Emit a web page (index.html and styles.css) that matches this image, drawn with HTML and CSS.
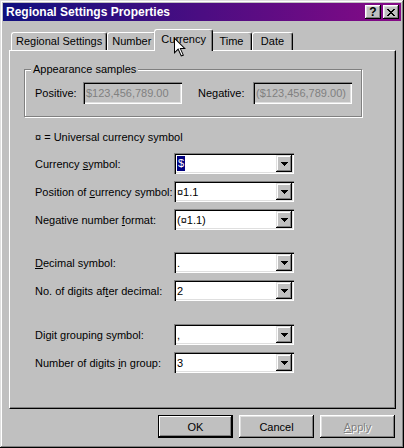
FILE: index.html
```html
<!DOCTYPE html>
<html>
<head>
    <title>Regional Settings Properties</title>
    <link rel="stylesheet" href="styles.css">
</head>
<body>
<div class="window">
    <div class="titlebar">
        <span class="title">Regional Settings Properties</span>
        <button class="cap-btn help">?</button>
        <button class="cap-btn close">
            <svg width="8" height="7" viewBox="0 0 8 7" shape-rendering="crispEdges"><path d="M0 0h2v1H0zM6 0h2v1H6zM1 1h2v1H1zM5 1h2v1H5zM2 2h4v1H2zM3 3h2v1H3zM2 4h4v1H2zM1 5h2v1H1zM5 5h2v1H5zM0 6h2v1H0zM6 6h2v1H6z" fill="#000"/></svg>
        </button>
    </div>

    <div class="content">
        <div class="tabs">
            <div class="tab">Regional Settings</div>
            <div class="tab">Number</div>
            <div class="tab active">Currency</div>
            <div class="tab">Time</div>
            <div class="tab">Date</div>
        </div>

        <div class="panel">
            <div class="group">
                <span class="group-label">Appearance samples</span>
                <div class="sample-row">
                    <span class="sample-label">Positive:</span>
                    <span class="sample">$123,456,789.00</span>
                    <span class="sample-label negative">Negative:</span>
                    <span class="sample">($123,456,789.00)</span>
                </div>
            </div>

            <p class="note">¤ = Universal currency symbol</p>

            <div class="section">
                <div class="row">
                    <label>Currency <u>s</u>ymbol:</label>
                    <div class="combo"><span class="combo-value"><span class="selected">$</span></span><span class="combo-btn"><svg width="7" height="4" shape-rendering="crispEdges"><path d="M0 0h7v1H0zM1 1h5v1H1zM2 2h3v1H2zM3 3h1v1H3z" fill="#000"/></svg></span></div>
                </div>
                <div class="row">
                    <label>Position of <u>c</u>urrency symbol:</label>
                    <div class="combo"><span class="combo-value">¤1.1</span><span class="combo-btn"><svg width="7" height="4" shape-rendering="crispEdges"><path d="M0 0h7v1H0zM1 1h5v1H1zM2 2h3v1H2zM3 3h1v1H3z" fill="#000"/></svg></span></div>
                </div>
                <div class="row">
                    <label>Negative number <u>f</u>ormat:</label>
                    <div class="combo"><span class="combo-value">(¤1.1)</span><span class="combo-btn"><svg width="7" height="4" shape-rendering="crispEdges"><path d="M0 0h7v1H0zM1 1h5v1H1zM2 2h3v1H2zM3 3h1v1H3z" fill="#000"/></svg></span></div>
                </div>
            </div>

            <div class="section">
                <div class="row">
                    <label><u>D</u>ecimal symbol:</label>
                    <div class="combo"><span class="combo-value">.</span><span class="combo-btn"><svg width="7" height="4" shape-rendering="crispEdges"><path d="M0 0h7v1H0zM1 1h5v1H1zM2 2h3v1H2zM3 3h1v1H3z" fill="#000"/></svg></span></div>
                </div>
                <div class="row">
                    <label>No. of digits af<u>t</u>er decimal:</label>
                    <div class="combo"><span class="combo-value">2</span><span class="combo-btn"><svg width="7" height="4" shape-rendering="crispEdges"><path d="M0 0h7v1H0zM1 1h5v1H1zM2 2h3v1H2zM3 3h1v1H3z" fill="#000"/></svg></span></div>
                </div>
            </div>

            <div class="section last">
                <div class="row">
                    <label>Digit <u>g</u>rouping symbol:</label>
                    <div class="combo"><span class="combo-value">,</span><span class="combo-btn"><svg width="7" height="4" shape-rendering="crispEdges"><path d="M0 0h7v1H0zM1 1h5v1H1zM2 2h3v1H2zM3 3h1v1H3z" fill="#000"/></svg></span></div>
                </div>
                <div class="row">
                    <label>Number of digits <u>i</u>n group:</label>
                    <div class="combo"><span class="combo-value">3</span><span class="combo-btn"><svg width="7" height="4" shape-rendering="crispEdges"><path d="M0 0h7v1H0zM1 1h5v1H1zM2 2h3v1H2zM3 3h1v1H3z" fill="#000"/></svg></span></div>
                </div>
            </div>
        </div>

        <div class="actions">
            <button class="btn default">OK</button>
            <button class="btn">Cancel</button>
            <button class="btn disabled"><u>A</u>pply</button>
        </div>
    </div>

    <!-- mouse pointer over the Currency tab -->
    <svg class="pointer" width="13" height="20" viewBox="0 0 13 20">
        <path d="M0 0V17L4 13L7 19.5L10 18.5L7 12H12Z" fill="#000"/>
        <path d="M1 2.4V14.6L4.3 11.3L7.5 18.2L8.7 17.7L5.6 11H9.6Z" fill="#fff"/>
    </svg>
</div>
</body>
</html>
```

FILE: styles.css
```css
body {
    margin: 0;
    background: #c0c0c0;
}

.window {
    position: relative;
    width: 404px;
    height: 448px;
    box-sizing: border-box;
    padding: 3px;
    background: #c0c0c0;
    box-shadow: inset -1px -1px #000, inset 1px 1px #dfdfdf, inset -2px -2px #808080, inset 2px 2px #fff;
    font-family: "Liberation Sans", Arial, sans-serif;
    font-size: 11px;
    color: #000;
}

/* title bar */
.titlebar {
    display: flex;
    align-items: center;
    height: 18px;
    padding: 0 2px 0 3px;
    background: linear-gradient(to right, #10107e, #860a86);
    color: #fff;
    font-weight: bold;
    font-size: 12px;
}

.title {
    flex: 1;
}

.cap-btn {
    display: flex;
    align-items: center;
    justify-content: center;
    width: 16px;
    height: 14px;
    margin: 0 0 0 2px;
    padding: 0;
    border: none;
    background: #c0c0c0;
    box-shadow: inset -1px -1px #000, inset 1px 1px #fff, inset -2px -2px #808080, inset 2px 2px #dfdfdf;
    font-family: "Liberation Sans", Arial, sans-serif;
    font-size: 12px;
    font-weight: bold;
    color: #000;
    line-height: 1;
}

.cap-btn.help {
    padding-bottom: 1px;
}

/* tabs */
.content {
    padding: 8px 5px 0 6px;
}

.tabs {
    display: flex;
    align-items: flex-end;
    height: 21px;
    padding-left: 2px;
}

.tab {
    display: flex;
    align-items: center;
    justify-content: center;
    box-sizing: border-box;
    min-width: 41px;
    height: 18px;
    padding: 0 4px 1px;
    border: 1px solid;
    border-color: #fff #000 transparent #fff;
    border-bottom: none;
    border-radius: 3px 3px 0 0;
    box-shadow: inset -1px 0 #808080;
}

.tab.active {
    position: relative;
    z-index: 1;
    height: 22px;
    margin: 0 -2px -1px;
    padding: 0 6px 3px;
    background: #c0c0c0;
}

.panel {
    height: 359px;
    box-sizing: border-box;
    border: 1px solid;
    border-color: #fff #000 #000 #fff;
    box-shadow: inset -1px -1px #808080;
}

/* appearance samples */
.group {
    position: relative;
    width: 338px;
    height: 48px;
    box-sizing: border-box;
    margin: 18px 0 0 14px;
    padding: 12px 0 0 10px;
    border: 1px solid #808080;
    box-shadow: 1px 1px 0 #fff, inset 1px 1px 0 #fff;
}

.group-label {
    position: absolute;
    top: -7px;
    left: 6px;
    padding: 0 2px;
    line-height: 13px;
    background: #c0c0c0;
}

.sample-row {
    display: flex;
    align-items: center;
}

.sample-label {
    width: 48px;
}

.sample-label.negative {
    width: 55px;
    margin-left: 16px;
}

.sample {
    display: flex;
    align-items: center;
    width: 99px;
    height: 22px;
    box-sizing: border-box;
    padding-left: 3px;
    color: #808080;
    box-shadow: inset 1px 1px #808080, inset 2px 2px #000, inset -1px -1px #fff, inset -2px -2px #dfdfdf;
}

.note {
    margin: 14px 0 0 25px;
    line-height: 13px;
}

/* combo rows */
.section {
    display: flex;
    flex-direction: column;
    gap: 7px;
    margin: 9px 0 0 25px;
}

.section + .section {
    margin-top: 22px;
}

.section.last {
    margin-top: 23px;
}

.row {
    display: flex;
    align-items: center;
    height: 21px;
}

.row label {
    width: 139px;
}

.combo {
    display: flex;
    align-items: center;
    width: 120px;
    height: 21px;
    box-sizing: border-box;
    padding: 2px;
    background: #fff;
    box-shadow: inset 1px 1px #808080, inset 2px 2px #000, inset -1px -1px #fff, inset -2px -2px #dfdfdf;
}

.combo-value {
    flex: 1;
    padding-left: 1px;
}

.selected {
    display: inline-block;
    height: 15px;
    padding: 0 1px;
    line-height: 15px;
    background: #000080;
    color: #fff;
    vertical-align: middle;
}

.combo-btn {
    display: flex;
    align-items: center;
    justify-content: center;
    width: 16px;
    height: 17px;
    background: #c0c0c0;
    box-shadow: inset -1px -1px #000, inset 1px 1px #dfdfdf, inset -2px -2px #808080, inset 2px 2px #fff;
}

/* bottom buttons */
.actions {
    display: flex;
    justify-content: flex-end;
    gap: 6px;
    margin-top: 6px;
    padding-right: 1px;
}

.btn {
    width: 75px;
    height: 23px;
    padding: 0;
    border: none;
    background: #c0c0c0;
    box-shadow: inset -1px -1px #000, inset 1px 1px #fff, inset -2px -2px #808080, inset 2px 2px #dfdfdf;
    font-family: "Liberation Sans", Arial, sans-serif;
    font-size: 11px;
    color: #000;
}

.btn.default {
    box-shadow: inset 0 0 0 1px #000, inset -2px -2px #000, inset 2px 2px #fff, inset -3px -3px #808080;
}

.btn.disabled {
    color: #808080;
    text-shadow: 1px 1px 0 #fff;
}

.pointer {
    position: absolute;
    z-index: 2;
    left: 174px;
    top: 37px;
}
```
